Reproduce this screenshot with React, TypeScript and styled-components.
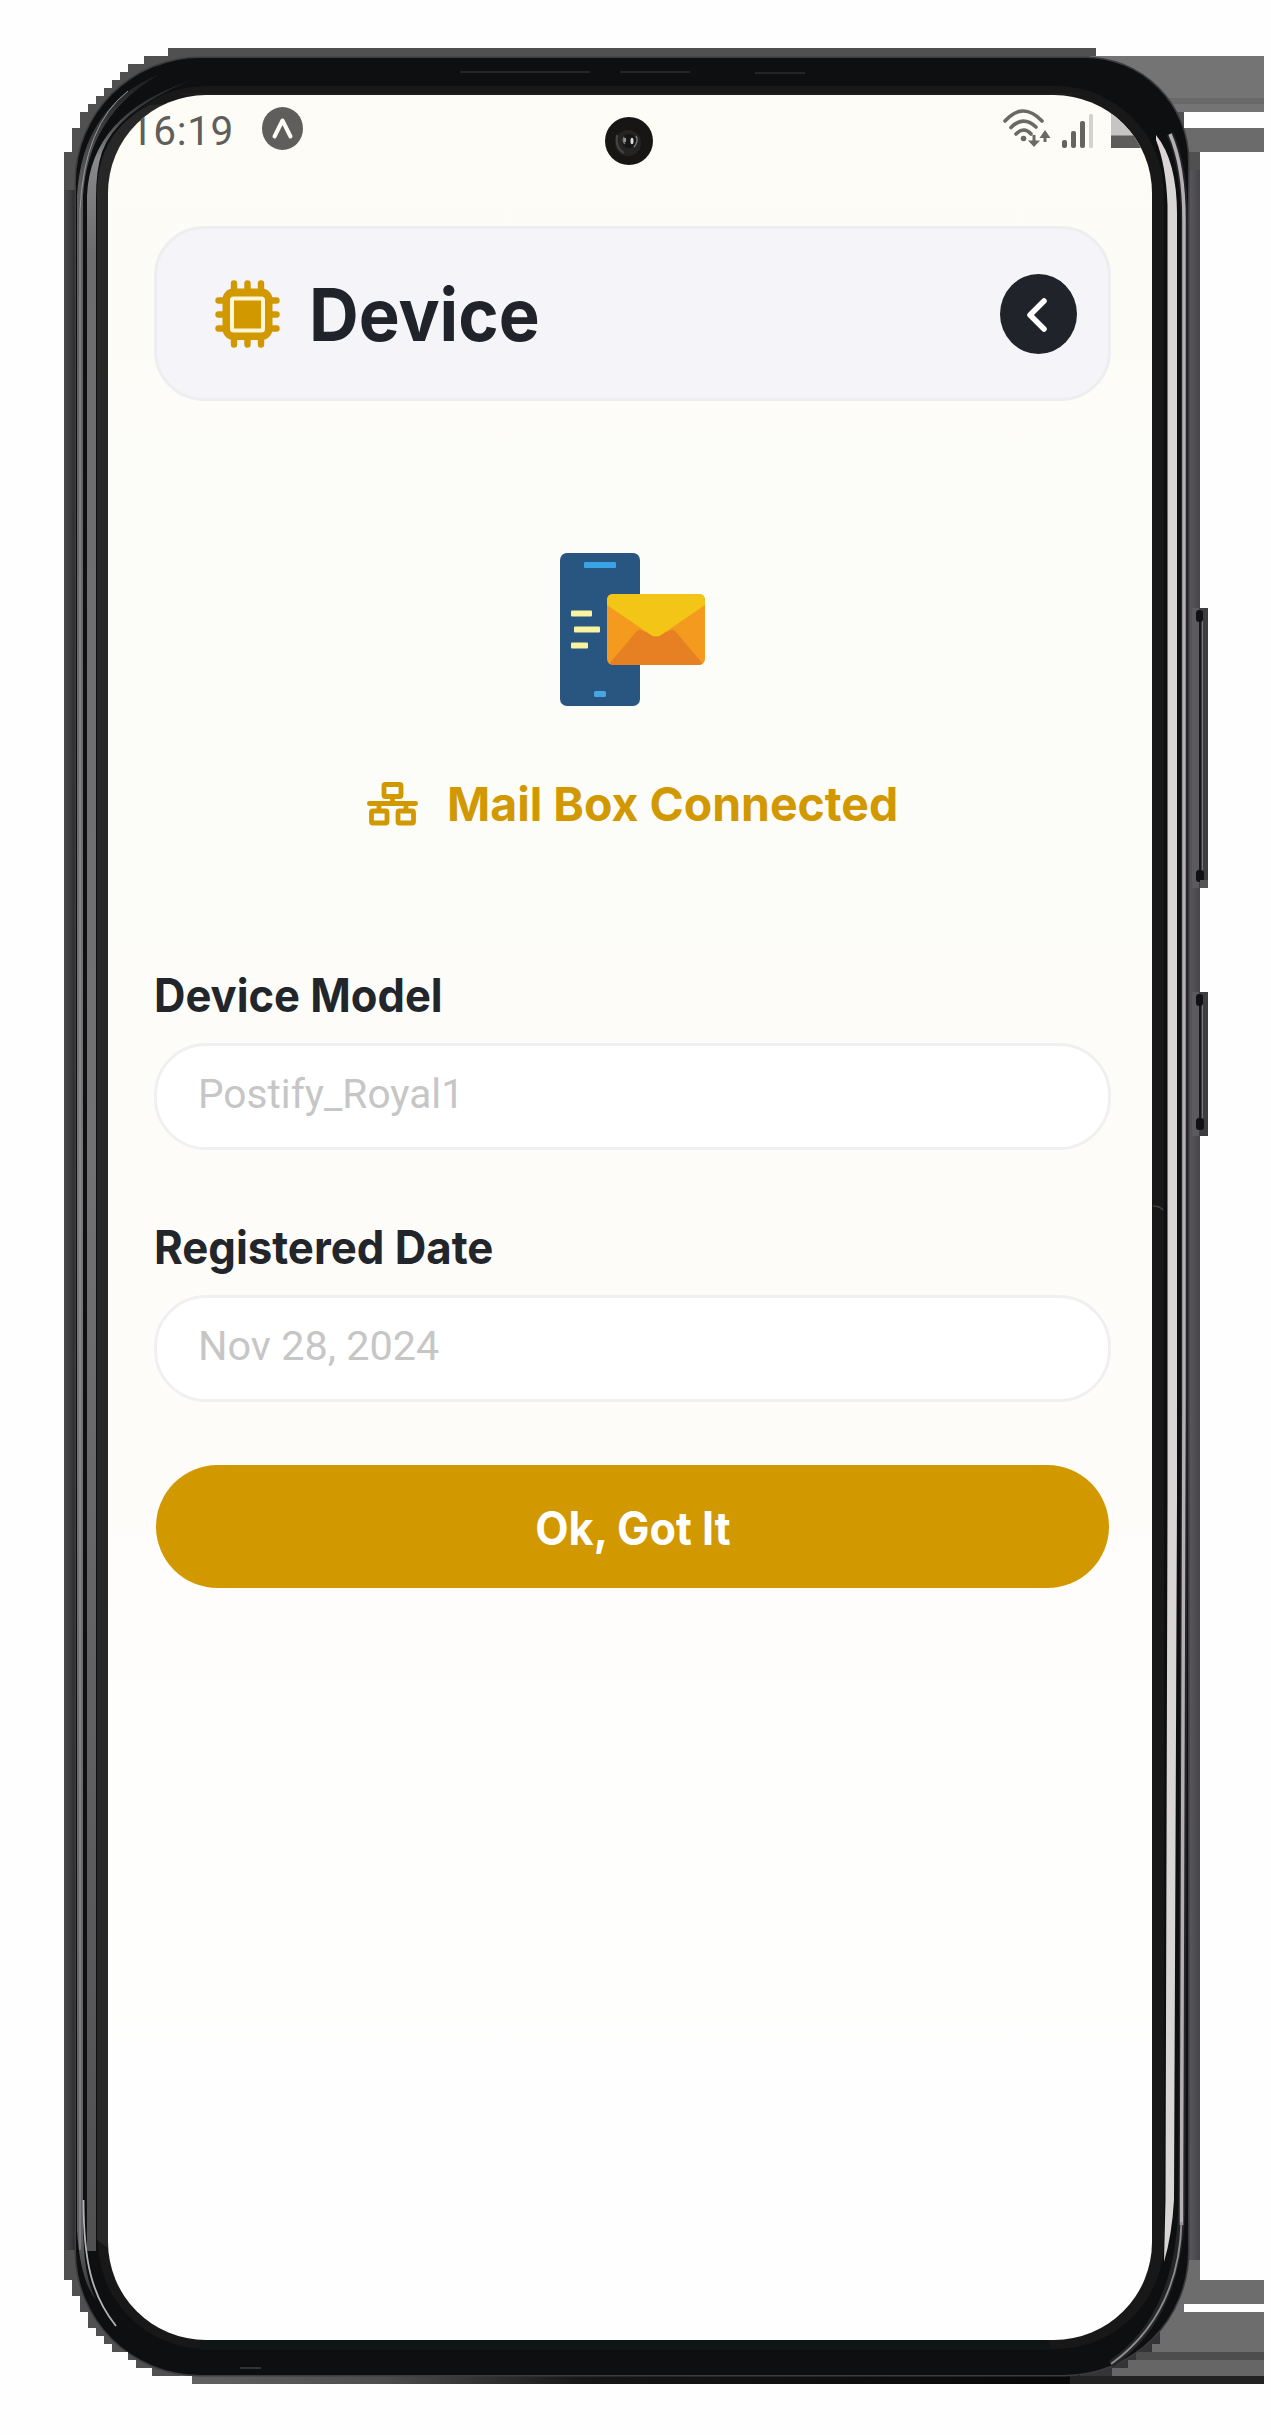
import React from "react";
import styled, { createGlobalStyle } from "styled-components";

const GlobalStyle = createGlobalStyle`
  html, body { margin: 0; padding: 0; background: #fefefe; }
  *, *::before, *::after { box-sizing: border-box; }
  button, input { font: inherit; }
`;

const gold = "#d29800";
const ink = "#20242a";

const Page = styled.main`
  position: relative;
  width: 1271px;
  height: 2435px;
  padding: 95px 119px 95px 108px;
  overflow: hidden;
  background: #fefefe;
`;

const DeviceFrame = styled.svg`
  position: absolute;
  inset: 0;
  width: 1271px;
  height: 2435px;
`;

const Screen = styled.section`
  position: relative;
  display: flex;
  flex-direction: column;
  width: 1044px;
  height: 2245px;
  border-radius: 98px;
  overflow: hidden;
  background: linear-gradient(#fdfcf7 0%, #fcfcf9 28%, #fdfcf9 50%, #fefdfb 70.5%, #fefefc 70.6%, #fefefe 88%);
`;

const StatusBar = styled.div`
  display: flex;
  align-items: flex-start;
  height: 131px;
  padding: 12px 0 0 22px;
`;

const Clock = styled.time`
  width: 132px;
  font: 400 40.5px/48px Roboto, sans-serif;
  letter-spacing: 0.6px;
  color: #5f5e5c;
`;

const StatusIcons = styled.div`
  display: flex;
  margin-left: auto;
`;

const Camera = styled.svg`
  position: absolute;
  left: 497px;
  top: 22px;
`;

const Content = styled.div`
  display: flex;
  flex-direction: column;
  padding: 0 41px 0 46px;
`;

const Header = styled.header`
  display: flex;
  align-items: center;
  height: 175px;
  padding: 0 31px 0 58px;
  border: 3px solid #eeeef1;
  border-radius: 50px;
  background: #f4f4f9;
`;

const Stretch = styled.span<{ $x: number; $origin?: string }>`
  display: inline-block;
  white-space: pre;
  transform: scaleX(${(p) => p.$x});
  transform-origin: ${(p) => p.$origin ?? "left"} center;
`;

const Title = styled.h1`
  flex: 1;
  margin: 3px 0 0 29px;
  font: 700 73px/90px Inter, sans-serif;
  color: ${ink};
`;

const BackButton = styled.button`
  display: flex;
  width: 77px;
  height: 80px;
  margin-top: 1px;
  padding: 0;
  border: 0;
  border-radius: 50%;
  background: ${ink};
`;

const Illustration = styled.svg`
  display: block;
  margin: 152px 0 0 405px;
`;

const ConnectionStatus = styled.div`
  display: flex;
  align-items: center;
  height: 60px;
  margin: 67px 0 0 213px;
  font: 700 47px/60px Inter, sans-serif;
  color: ${gold};
`;

const ConnectionLabel = styled.span`
  margin-left: 29px;
`;

const Field = styled.label<{ $gap: number }>`
  display: flex;
  flex-direction: column;
  margin-top: ${(p) => p.$gap}px;
`;

const FieldLabel = styled.span`
  height: 60px;
  font: 700 46px/60px Inter, sans-serif;
  color: #22262a;
`;

const FieldValue = styled.span`
  height: 107px;
  margin-top: 18px;
  padding: 0 41px;
  border: 3px solid #f0f0f2;
  border-radius: 52px;
  background: #fff;
  font: 400 41.5px/95px Roboto, sans-serif;
  color: #c6c6c6;
`;

const SubmitButton = styled.button`
  height: 123px;
  margin: 63px 2px 0;
  padding: 2px 0 0;
  border: 0;
  border-radius: 62px;
  background: ${gold};
  color: #fff;
  && { font: 700 46px/60px Inter, sans-serif; }
`;

const silhouette =
  "M168 48H1096V56H1264V112H1184V128H1264V152H1200V608H1208V888H1200V992H1208V1136H1200V2280H1264V2304H1184V2312H1264V2384H192V2376H152V2368H136V2360H128V2352H112V2344H104V2336H96V2328H88V2312H80V2296H72V2280H64V152H72V128H80V112H88V104H96V96H104V88H112V80H120V72H128V64H144V56H168Z";

const body =
  "M200 58H1085A103 103 0 0 1 1188 161V2251A124 124 0 0 1 1064 2375H200A124 124 0 0 1 76 2251V182A124 124 0 0 1 200 58Z";

function PhoneBody() {
  return (
    <DeviceFrame viewBox="0 0 1271 2435" aria-hidden="true">
      <defs>
        <linearGradient id="sideRight">
          <stop offset="0" stopColor="#242426" />
          <stop offset=".3" stopColor="#57555a" />
          <stop offset="1" stopColor="#454447" />
        </linearGradient>
        <linearGradient id="sideLeft">
          <stop offset="0" stopColor="#4a4a4b" />
          <stop offset=".55" stopColor="#3a3a3c" />
          <stop offset="1" stopColor="#242426" />
        </linearGradient>
        <linearGradient id="bottomEdge" x1="0" x2="1">
          <stop offset="0" stopColor="#626262" />
          <stop offset=".22" stopColor="#4e4e4e" />
          <stop offset=".45" stopColor="#161616" />
          <stop offset="1" stopColor="#080808" />
        </linearGradient>
        <linearGradient id="glassLeft" gradientUnits="userSpaceOnUse" x1="0" x2="0" y1="80" y2="2251">
          <stop offset="0" stopColor="#1c1e20" />
          <stop offset=".02" stopColor="#4b4c4e" />
          <stop offset=".035" stopColor="#8a8a8c" />
          <stop offset=".08" stopColor="#6c6c6e" />
          <stop offset=".5" stopColor="#727274" />
          <stop offset="1" stopColor="#505050" />
        </linearGradient>
        <linearGradient id="rimLeft" gradientUnits="userSpaceOnUse" x1="0" x2="0" y1="70" y2="2330">
          <stop offset="0" stopColor="#1a1b1d" />
          <stop offset=".05" stopColor="#5c5c5e" />
          <stop offset=".5" stopColor="#777779" />
          <stop offset=".96" stopColor="#606062" />
          <stop offset="1" stopColor="#1a1b1d" />
        </linearGradient>
        <clipPath id="outline"><path d={silhouette} /></clipPath>
      </defs>
      <g clipPath="url(#outline)">
        <rect x="60" y="40" width="1210" height="2350" fill="#505050" />
        <rect x="1090" y="56" width="180" height="44" fill="#747475" />
        <rect x="1090" y="98" width="180" height="8" fill="#696969" />
        <rect x="1090" y="104" width="180" height="8" fill="#747475" />
        <rect x="1150" y="128" width="120" height="24" fill="#6b6b6c" />
        <rect x="64" y="190" width="13" height="2060" fill="url(#sideLeft)" />
        <rect x="1186" y="170" width="14" height="2090" fill="url(#sideRight)" />
        <rect x="1080" y="2260" width="190" height="92" fill="#6d6d6e" />
        <rect x="1080" y="2352" width="190" height="8" fill="#4d4d4d" />
        <rect x="1110" y="2360" width="160" height="16" fill="#666" />
        <path d="M1112 2376V2368H1128V2360H1136V2352H1152V2344H1160V2332L1050 2330V2376Z" fill="#343436" />
        <rect x="180" y="2375" width="900" height="9" fill="url(#bottomEdge)" />
        <rect x="1070" y="2376" width="200" height="8" fill="#222" />
        <path d={body} fill="#0e0f10" stroke="#3c3c3e" strokeWidth="3" />
        <path d={body} fill="#0e0f10" />
        <rect x="98" y="86" width="1066" height="2263" rx="108" fill="#191818" />
        <path d="M97 2240V190Q99 130 150 105L220 100V2330Z" fill="#272728" />
        <path d="M200 2339H1050V2350H200Z" fill="#101516" />
        <path d="M180 94H1080" stroke="#211b19" strokeWidth="2" />
        <path d="M77 2230V196Q82 105 160 74Q88 115 83 196V2230L84 2250Q86 2280 96 2300Q80 2280 77 2230Z" fill="url(#rimLeft)" />
        <path d="M80 2250V210Q84 125 128 91" fill="none" stroke="#99999c" strokeWidth="1" />
        <path d="M83.500 2200C83.500 2262 92 2296 116 2326" fill="none" stroke="#b2b3b7" strokeWidth="1.800" />
        <path d="M87 2251V196Q90 115 189 81Q116 112 102 152Q96 170 96 198V2251Z" fill="url(#glassLeft)" />
        <path d="M1156 135Q1178 162 1177 220V1500L1174 2200Q1172 2235 1164 2262L1165.500 2200L1167.500 1500V205Q1166 165 1156 140Z" fill="#d9d5d5" />
        <path d="M1170 134Q1184 166 1184.500 220V1400L1182 2200C1181 2275 1160 2330 1111 2364" fill="none" stroke="#252427" strokeWidth="7" />
        <path d="M1170 134Q1184 166 1184 220V1400L1181.500 2200V2225" fill="none" stroke="#b5afb4" strokeWidth="3.500" />
        <path d="M1181.500 2222C1180 2280 1158 2330 1111 2364" fill="none" stroke="#8b8b8f" strokeWidth="2" />
        <path d="M460 72H590M620 72H690M755 73H805" stroke="#2c2e2e" strokeWidth="1.5" />
        <path d="M240 2368H261" stroke="#333" strokeWidth="2" />
        <path d="M1153 1206Q1160 1206 1163 1210" fill="none" stroke="#464139" strokeWidth="1.5" />
        {[[608, 888], [992, 1136]].map(([top, bottom]) => (
          <g key={top}>
            <rect x="1192" y={top} width="7" height={bottom - top} fill="#5d5a5f" />
            <rect x="1199" y={top} width="9" height={bottom - top} fill="#3d3d3f" />
            <path d={`M1200 ${top + 8}V${bottom - 8}`} stroke="#171719" strokeWidth="2" />
            <path d={`M1202.5 ${top + 12}V${bottom - 14}`} stroke="#777579" />
            <rect x="1196" y={top + 2} width="7" height="12" rx="3" fill="#101113" />
            <rect x="1196" y={bottom - 18} width="8" height="12" rx="3" fill="#101113" />
          </g>
        ))}
        <rect x="1200" y="880" width="8" height="8" fill="#555" />
      </g>
    </DeviceFrame>
  );
}

const ExpoIcon = () => (
  <svg width="41" height="43" viewBox="0 0 41 43">
    <ellipse cx="20.5" cy="21.5" rx="20.5" ry="21.5" fill="#5f5e5c" />
    <path d="M12.5 29.5L20.5 13.5L28.5 29.5" fill="none" stroke="#fcfbf6" strokeWidth="4" strokeLinecap="round" strokeLinejoin="round" />
  </svg>
);

/* Wi-Fi with traffic arrows, cell signal and battery */
const NetworkStatus = () => (
  <svg width="150" height="48" viewBox="0 0 150 48">
    <g fill="none" stroke="#6b6965" strokeWidth="3.6" strokeLinecap="round">
      <path d="M3 14Q21 -6 40 14" />
      <path d="M9 20.5Q21 8 34 20" />
      <path d="M14 27Q22 19 29 27" />
      <path d="M32 28V35M43 25V35" strokeWidth="3" strokeLinecap="butt" />
    </g>
    <circle cx="21.5" cy="31.500" r="2.800" fill="#6b6965" />
    <path d="M26 33.500H38L32 40ZM37.500 31H48.500L43 23Z" fill="#6b6965" />
    <g fill="#666461">
      <rect x="60" y="33" width="5" height="8" rx="2" />
      <rect x="69" y="24" width="5" height="17" rx="2" />
      <rect x="78" y="14" width="5" height="27" rx="2" />
      <rect x="87" y="7" width="4" height="34" rx="1.500" fill="#d3d2ce" />
    </g>
    <rect x="109" y="7" width="34" height="23" fill="#c6c5c3" />
    <rect x="109" y="28.500" width="34" height="12.500" fill="#5d5c5b" />
  </svg>
);

const ChipIcon = () => (
  <svg width="65" height="68" viewBox="0 0 65 68">
    <g stroke={gold} strokeWidth="6.400" strokeLinecap="round">
      <path d="M19 3.500V64.500M32.500 3.500V64.500M46 3.500V64.500M3.500 20.500H61.500M3.500 34.500H61.500M3.500 48.500H61.500" />
    </g>
    <rect x="7.500" y="8.500" width="50" height="51.500" rx="11" fill={gold} />
    <rect x="17" y="18.500" width="31" height="32" rx="1.500" fill="none" stroke="#fff6d8" strokeWidth="4" />
  </svg>
);

const NetworkIcon = () => (
  <svg width="51" height="44" viewBox="0 0 51 44">
    <g fill="none" stroke={gold} strokeWidth="4.800" strokeLinejoin="round">
      <rect x="17" y="2.500" width="17" height="12" rx="1.500" />
      <rect x="4.500" y="29" width="15.500" height="12" rx="1.500" />
      <rect x="31" y="29" width="15.500" height="12" rx="1.500" />
      <path d="M25.500 14V21.500M12 21.500V29M39 21.500V29" />
      <path d="M2.400 21.500H48.600" strokeLinecap="round" />
    </g>
  </svg>
);

export default function App() {
  return (
    <>
      <GlobalStyle />
      <Page>
        <PhoneBody />
        <Screen>
          <StatusBar>
            <Clock>16:19</Clock>
            <ExpoIcon />
            <StatusIcons><NetworkStatus /></StatusIcons>
          </StatusBar>
          <Camera width="48" height="48" viewBox="0 0 48 48">
            <circle cx="24" cy="24" r="24" fill="#171614" />
            <circle cx="23" cy="26" r="13" fill="#242424" />
            <path d="M12 18Q10 31 19 36" fill="none" stroke="#454545" strokeWidth="2" />
            <circle cx="24" cy="24" r="7" fill="#151515" />
            <path d="M19 20Q17 24 20 27M31 19Q34 24 29 30" fill="none" stroke="#777" strokeWidth="1.500" />
            <ellipse cx="27" cy="24" rx="1.500" ry="3.200" fill="#ddd" />
            <ellipse cx="20" cy="23" rx="1.200" ry="2.300" fill="#999" />
          </Camera>
          <Content>
            <Header>
              <ChipIcon />
              <Title><Stretch $x={0.942}>Device</Stretch></Title>
              <BackButton aria-label="Back">
                <svg width="77" height="80" viewBox="0 0 77 80">
                  <path d="M44 27L30 41L44 55" fill="none" stroke="#fff" strokeWidth="5.500" strokeLinecap="round" strokeLinejoin="round" />
                </svg>
              </BackButton>
            </Header>
            <Illustration width="147" height="154" viewBox="0 0 147 154">
              <rect x="1" y="0" width="80" height="153" rx="7" fill="#285680" />
              <rect x="25" y="9" width="32" height="6" rx="1" fill="#38a4e5" />
              <rect x="35" y="138" width="12" height="6" rx="1.500" fill="#48a7df" />
              <g fill="#f8f2a1">
                <rect x="12" y="57.500" width="21" height="6" rx="1" />
                <rect x="15" y="73.500" width="26" height="6" rx="1" />
                <rect x="12" y="89.500" width="17" height="6" rx="1" />
              </g>
              <rect x="48" y="41" width="98" height="71" rx="6" fill="#f49b1f" />
              <path d="M51 110L77 79Q80 75 84 78L97 83L110 78Q114 75 117 79L143 110Q142 112 140 112H54Q52 112 51 110Z" fill="#e77f23" />
              <path d="M48 52V47Q48 41 54 41H140Q146 41 146 47V52L102 82Q97 85 92 82Z" fill="#f3c517" />
            </Illustration>
            <ConnectionStatus>
              <NetworkIcon />
              <ConnectionLabel><Stretch $x={0.987}>Mail Box Connected</Stretch></ConnectionLabel>
            </ConnectionStatus>
            <Field $gap={131}>
              <FieldLabel><Stretch $x={0.946}>Device Model</Stretch></FieldLabel>
              <FieldValue><Stretch $x={0.979}>Postify_Royal1</Stretch></FieldValue>
            </Field>
            <Field $gap={67}>
              <FieldLabel><Stretch $x={0.951}>Registered Date</Stretch></FieldLabel>
              <FieldValue><Stretch $x={0.998}>Nov 28, 2024</Stretch></FieldValue>
            </Field>
            <SubmitButton><Stretch $x={0.94} $origin="center">Ok, Got It</Stretch></SubmitButton>
          </Content>
        </Screen>
      </Page>
    </>
  );
}
